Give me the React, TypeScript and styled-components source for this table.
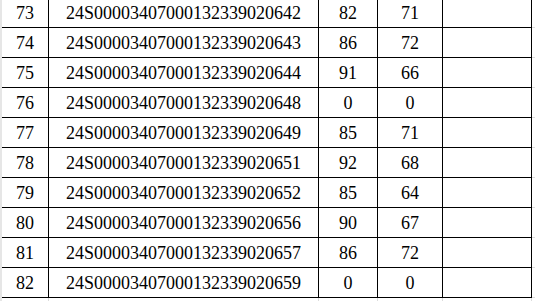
import styled, { createGlobalStyle } from "styled-components";

const GlobalStyle = createGlobalStyle`
  html, body {
    margin: 0;
    padding: 0;
    background: #ffffff;
    overflow: hidden;
  }
`;

const Sheet = styled.div`
  width: 535px;
  height: 301px;
  overflow: hidden;
  border-left: 2px solid #e6e6e6;
  box-sizing: border-box;
`;

const Table = styled.table`
  border-collapse: separate;
  border-spacing: 0;
  table-layout: fixed;
  width: 600px;
  margin-top: -2px;
  font-family: "Liberation Serif", "Times New Roman", serif;
  font-size: 18px;
  color: #000;
`;

const Row = styled.tr`
  height: 30px;
`;

const Cell = styled.td<{ $grid?: boolean }>`
  box-sizing: border-box;
  padding: 0;
  height: 30px;
  text-align: center;
  vertical-align: middle;
  white-space: nowrap;
  line-height: 20px;
  border-right: 1px solid ${(p) => (p.$grid ? "#dcdcdc" : "#000")};
  border-bottom: 1px solid ${(p) => (p.$grid ? "#dcdcdc" : "#000")};
`;

const rows: [number, string, number, number][] = [
  [73, "24S00003407000132339020642", 82, 71],
  [74, "24S00003407000132339020643", 86, 72],
  [75, "24S00003407000132339020644", 91, 66],
  [76, "24S00003407000132339020648", 0, 0],
  [77, "24S00003407000132339020649", 85, 71],
  [78, "24S00003407000132339020651", 92, 68],
  [79, "24S00003407000132339020652", 85, 64],
  [80, "24S00003407000132339020656", 90, 67],
  [81, "24S00003407000132339020657", 86, 72],
  [82, "24S00003407000132339020659", 0, 0],
];

export default function App() {
  return (
    <>
      <GlobalStyle />
      <Sheet>
        <Table>
          <colgroup>
            <col style={{ width: 47 }} />
            <col style={{ width: 270 }} />
            <col style={{ width: 59 }} />
            <col style={{ width: 65 }} />
            <col style={{ width: 89 }} />
            <col />
          </colgroup>
          <tbody>
            {rows.map(([no, code, a, b]) => (
              <Row key={no}>
                <Cell>{no}</Cell>
                <Cell>{code}</Cell>
                <Cell>{a}</Cell>
                <Cell>{b}</Cell>
                <Cell />
                <Cell $grid />
              </Row>
            ))}
            {/* empty sheet row under the table, only its grid shows */}
            <Row>
              <Cell $grid />
              <Cell $grid />
              <Cell $grid />
              <Cell $grid />
              <Cell $grid />
              <Cell $grid />
            </Row>
          </tbody>
        </Table>
      </Sheet>
    </>
  );
}
